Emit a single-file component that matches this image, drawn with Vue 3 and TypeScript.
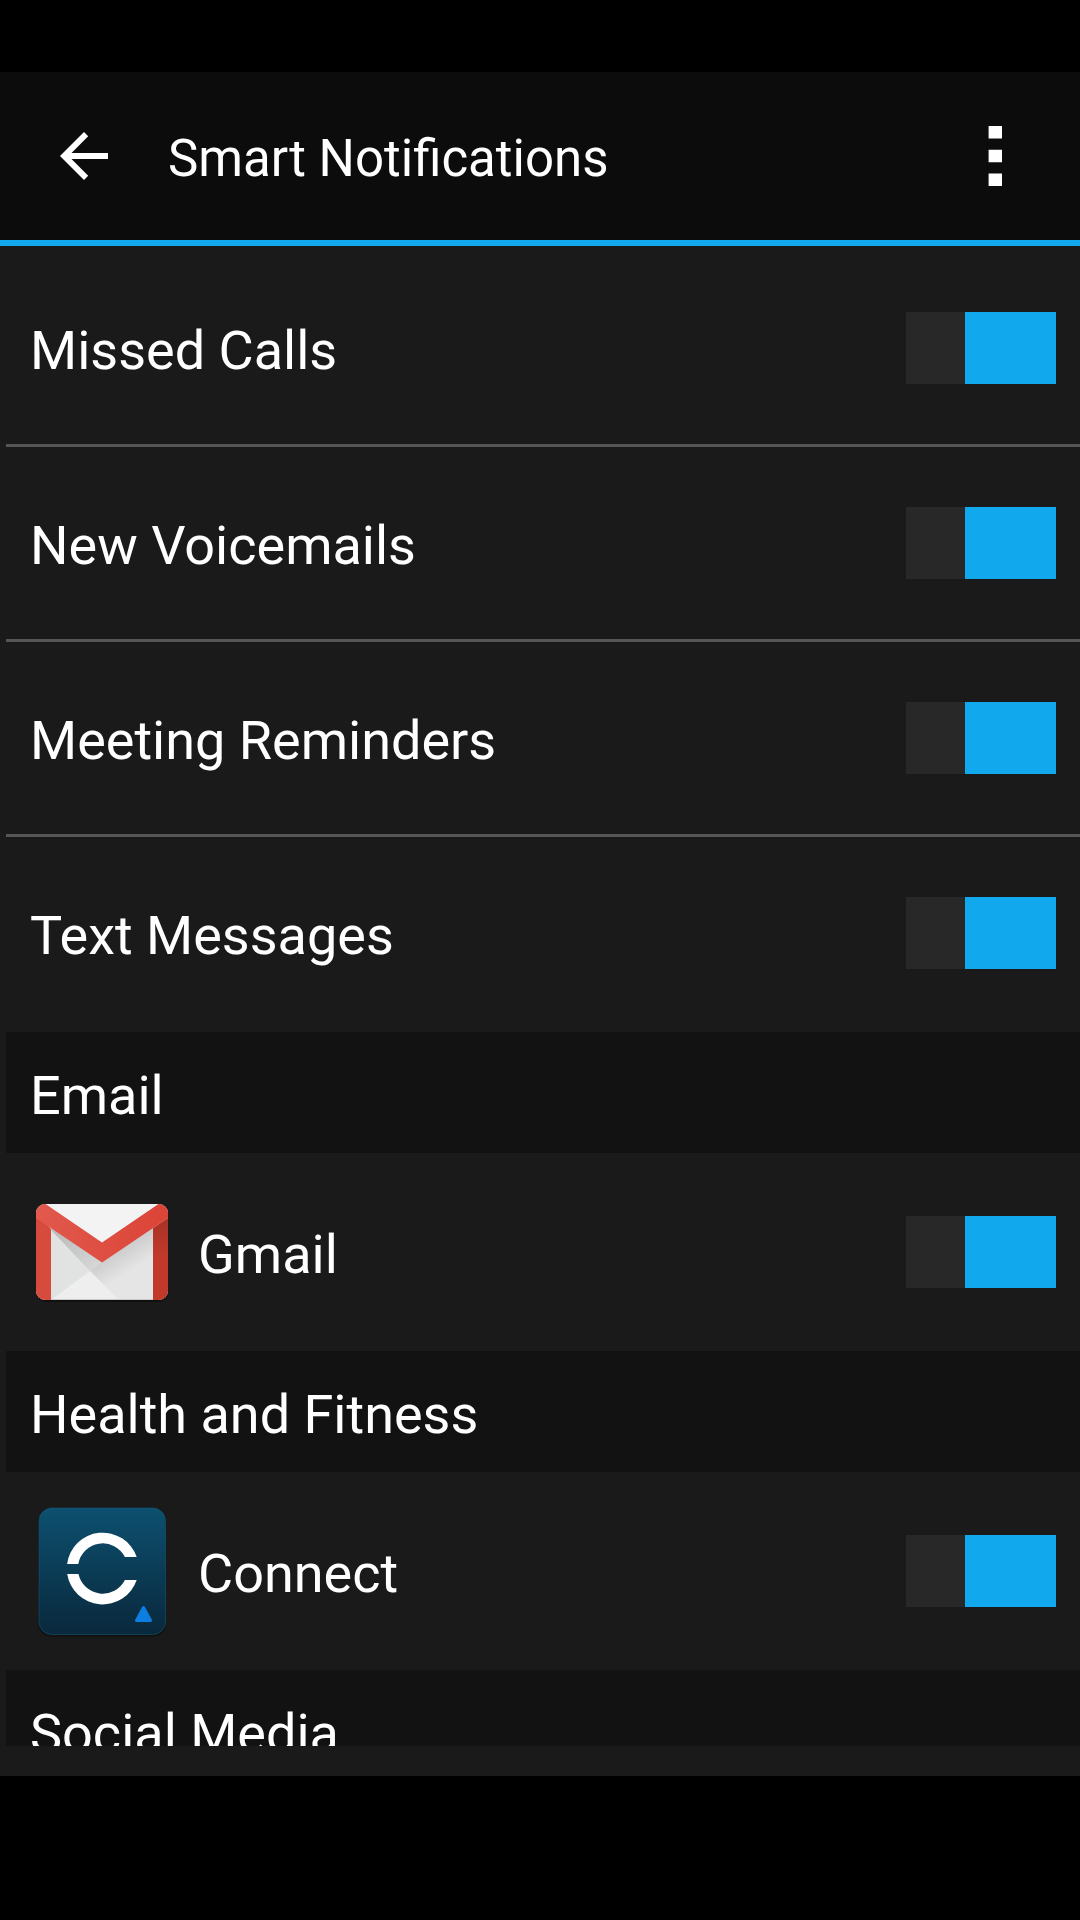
<script setup lang="ts">
import { ref } from 'vue'

interface Item {
  label: string
  icon?: 'gmail' | 'connect'
  on: boolean
}

interface Section {
  title: string
  items: Item[]
}

const general = ref<Item[]>([
  { label: 'Missed Calls', on: true },
  { label: 'New Voicemails', on: true },
  { label: 'Meeting Reminders', on: true },
  { label: 'Text Messages', on: true },
])

const sections = ref<Section[]>([
  { title: 'Email', items: [{ label: 'Gmail', icon: 'gmail', on: true }] },
  { title: 'Health and Fitness', items: [{ label: 'Connect', icon: 'connect', on: true }] },
  { title: 'Social Media', items: [] },
])
</script>

<template>
  <div class="screen">
    <header class="bar">
      <button class="back" aria-label="Back">
        <svg width="48" height="48" viewBox="0 0 48 48">
          <path d="M48 21H11.5L28.2 4.2L24 0L0 24L24 48L28.2 43.8L11.5 27H48Z" fill="#fff" />
        </svg>
      </button>
      <h1 class="title">Smart Notifications</h1>
      <button class="more" aria-label="More options">
        <svg width="14" height="60" viewBox="0 0 14 60">
          <path d="M.6 0H14V12.5H.6ZM.6 23.7H14V36.3H.6ZM.6 47.5H14V60H.6Z" fill="#fff" />
        </svg>
      </button>
    </header>

    <main class="list">
      <div v-for="item in general" :key="item.label" class="row plain">
        <span class="label">{{ item.label }}</span>
        <button class="switch" :class="{ on: item.on }" role="switch" :aria-checked="item.on" :aria-label="item.label" @click="item.on = !item.on">
          <span class="thumb"></span>
        </button>
      </div>

      <section v-for="section in sections" :key="section.title">
        <h2 class="heading">{{ section.title }}</h2>
        <div v-for="item in section.items" :key="item.label" class="row app">
          <svg v-if="item.icon === 'gmail'" class="icon" width="144" height="144" viewBox="0 0 144 144">
            <defs>
              <clipPath id="envelope"><rect x="6" y="24" width="132" height="96" rx="9" /></clipPath>
              <clipPath id="paper"><rect x="21" y="24" width="102" height="96" /></clipPath>
              <linearGradient id="foldL" x1="35" y1="50" x2="62" y2="90" gradientUnits="userSpaceOnUse">
                <stop offset="0" stop-color="#bdbdbd" /><stop offset="1" stop-color="#d6d6d6" />
              </linearGradient>
              <linearGradient id="foldR" x1="92" y1="66" x2="106" y2="88" gradientUnits="userSpaceOnUse">
                <stop offset="0" stop-color="#cbcbcb" /><stop offset="1" stop-color="#e5e5e5" />
              </linearGradient>
              <linearGradient id="sideR" x1="0" y1="40" x2="0" y2="75" gradientUnits="userSpaceOnUse">
                <stop offset="0" stop-color="#a93226" /><stop offset="1" stop-color="#c0392b" />
              </linearGradient>
              <linearGradient id="vee" x1="6" y1="0" x2="138" y2="0" gradientUnits="userSpaceOnUse">
                <stop offset="0" stop-color="#e2594d" /><stop offset="1" stop-color="#db4437" />
              </linearGradient>
            </defs>
            <rect x="6" y="26" width="132" height="96" rx="9" fill="#000" opacity=".35" />
            <g clip-path="url(#envelope)">
              <rect x="6" y="24" width="132" height="96" fill="#e1e2e2" />
              <g clip-path="url(#paper)">
                <path d="M72 82L123 48V120H89L60 91Z" fill="url(#foldR)" />
                <path d="M21 50L60 91L72 82L21 46Z" fill="url(#foldL)" />
                <path d="M21 120L60 91L89 120Z" fill="#eee" />
              </g>
              <path d="M6 32L21 49V120H6Z" fill="#d64b3e" />
              <path d="M138 38L123 48V120H138Z" fill="url(#sideR)" />
              <path d="M15 24H129L72 63.500Z" fill="#f3f3f3" />
              <path d="M6 24H15.500L72 62.500L128.500 24H138V38L72 82.500L6 38Z" fill="url(#vee)" />
              <path d="M21 119.500H123" stroke="#c9c9c9" />
            </g>
          </svg>
          <svg v-else class="icon" width="144" height="144" viewBox="0 0 144 144">
            <defs>
              <linearGradient id="tile" x1="0" y1="0" x2="0" y2="1">
                <stop offset="0" stop-color="#0d5070" /><stop offset="1" stop-color="#09283c" />
              </linearGradient>
            </defs>
            <rect x="8" y="11" width="128" height="127" rx="13" fill="#000" opacity=".25" />
            <rect x="9" y="9" width="126.500" height="126.500" rx="13" fill="url(#tile)" stroke="#125877" stroke-opacity=".6" />
            <path d="M37.100 65A35.900 35.900 0 0 1 106.700 58H94.900A24.800 24.800 0 0 0 48.300 65Z" fill="#fff" />
            <path d="M37.200 75A35.900 35.900 0 0 0 106.700 81H94.900A24.800 24.800 0 0 1 48.500 75Z" fill="#fff" />
            <path d="M113.500 108.500L120.500 121.500H106.500Z" fill="#0c7ee2" stroke="#0c7ee2" stroke-width="3" stroke-linejoin="round" />
          </svg>
          <span class="label">{{ item.label }}</span>
          <button class="switch" :class="{ on: item.on }" role="switch" :aria-checked="item.on" :aria-label="item.label" @click="item.on = !item.on">
            <span class="thumb"></span>
          </button>
        </div>
      </section>
    </main>
  </div>
</template>

<style>
body {
  margin: 0;
  background: #000;
}
</style>

<style scoped>
.screen {
  box-sizing: border-box;
  width: 1080px;
  height: 1920px;
  padding: 72px 0 144px;
  display: flex;
  flex-direction: column;
  background: #000;
  color: #fff;
  font-family: Roboto, sans-serif;
  overflow: hidden;
}

button {
  padding: 0;
  border: 0;
  background: none;
}

svg {
  display: block;
}

.bar {
  flex: none;
  height: 168px;
  display: flex;
  align-items: center;
  padding: 0 78px 0 60px;
  background: #0c0c0c;
  border-bottom: 6px solid #12a8ee;
}

.title {
  flex: 1;
  margin: 6px 0 0 60px;
  font-size: 51px;
  line-height: 60px;
  font-weight: 400;
}

.list {
  flex: 1;
  min-height: 0;
  padding: 6px 0 0 6px;
  background: #1a1a1a;
  border-bottom: 30px solid #1a1a1a;
  overflow: hidden;
}

.row {
  display: flex;
  align-items: center;
  padding: 0 24px;
}

.plain {
  height: 192px;
  border-bottom: 3px solid #555;
}

.plain:nth-child(4) {
  border-bottom-color: transparent;
}

.app {
  height: 198px;
}

.icon {
  flex: none;
  margin-right: 24px;
}

.label {
  flex: 1;
  padding-top: 6px;
  font-size: 54px;
  line-height: 64px;
}

.heading {
  box-sizing: border-box;
  height: 121px;
  margin: 0;
  padding: 32px 24px 0;
  background: #121212;
  font-size: 54px;
  line-height: 64px;
  font-weight: 400;
}

.switch {
  flex: none;
  width: 150px;
  height: 72px;
  display: flex;
  background: #282828;
}

.switch.on {
  justify-content: flex-end;
}

.thumb {
  width: 91.500px;
  height: 72px;
  background: #555;
}

.on .thumb {
  background: #12a8ee;
}
</style>
